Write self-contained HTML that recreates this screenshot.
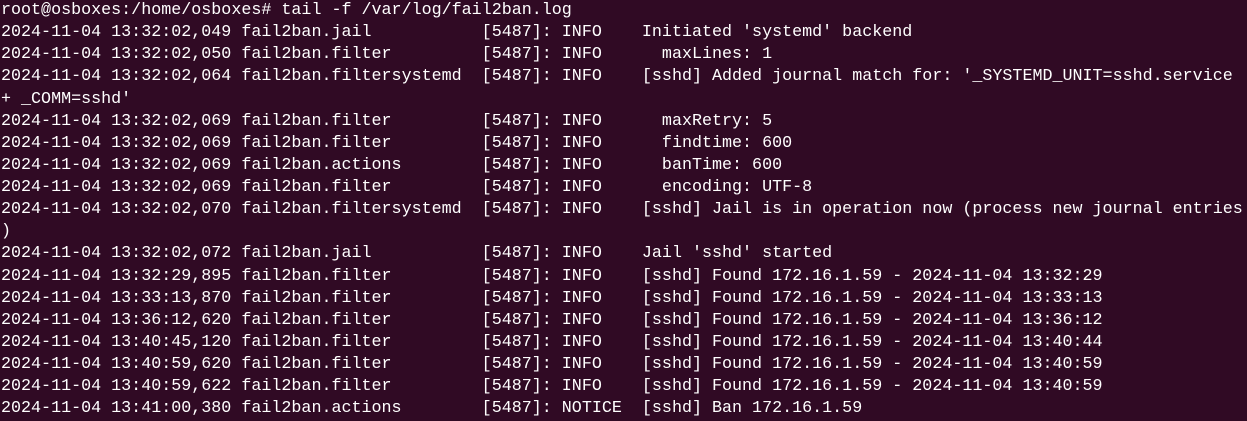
<!DOCTYPE html>
<html><head><style>
html,body{margin:0;padding:0;background:#300a24;width:1247px;height:421px;overflow:hidden}
pre{margin:0;padding:0 0 0 1px;position:relative;top:0px;font-family:"Liberation Mono","DejaVu Sans Mono",monospace;font-size:16.7px;line-height:22.12px;color:#ffffff;white-space:pre}
</style></head><body><pre>root@osboxes:/home/osboxes# tail -f /var/log/fail2ban.log
2024-11-04 13:32:02,049 fail2ban.jail           [5487]: INFO    Initiated 'systemd' backend
2024-11-04 13:32:02,050 fail2ban.filter         [5487]: INFO      maxLines: 1
2024-11-04 13:32:02,064 fail2ban.filtersystemd  [5487]: INFO    [sshd] Added journal match for: '_SYSTEMD_UNIT=sshd.service
+ _COMM=sshd'
2024-11-04 13:32:02,069 fail2ban.filter         [5487]: INFO      maxRetry: 5
2024-11-04 13:32:02,069 fail2ban.filter         [5487]: INFO      findtime: 600
2024-11-04 13:32:02,069 fail2ban.actions        [5487]: INFO      banTime: 600
2024-11-04 13:32:02,069 fail2ban.filter         [5487]: INFO      encoding: UTF-8
2024-11-04 13:32:02,070 fail2ban.filtersystemd  [5487]: INFO    [sshd] Jail is in operation now (process new journal entries
)
2024-11-04 13:32:02,072 fail2ban.jail           [5487]: INFO    Jail 'sshd' started
2024-11-04 13:32:29,895 fail2ban.filter         [5487]: INFO    [sshd] Found 172.16.1.59 - 2024-11-04 13:32:29
2024-11-04 13:33:13,870 fail2ban.filter         [5487]: INFO    [sshd] Found 172.16.1.59 - 2024-11-04 13:33:13
2024-11-04 13:36:12,620 fail2ban.filter         [5487]: INFO    [sshd] Found 172.16.1.59 - 2024-11-04 13:36:12
2024-11-04 13:40:45,120 fail2ban.filter         [5487]: INFO    [sshd] Found 172.16.1.59 - 2024-11-04 13:40:44
2024-11-04 13:40:59,620 fail2ban.filter         [5487]: INFO    [sshd] Found 172.16.1.59 - 2024-11-04 13:40:59
2024-11-04 13:40:59,622 fail2ban.filter         [5487]: INFO    [sshd] Found 172.16.1.59 - 2024-11-04 13:40:59
2024-11-04 13:41:00,380 fail2ban.actions        [5487]: NOTICE  [sshd] Ban 172.16.1.59</pre></body></html>
